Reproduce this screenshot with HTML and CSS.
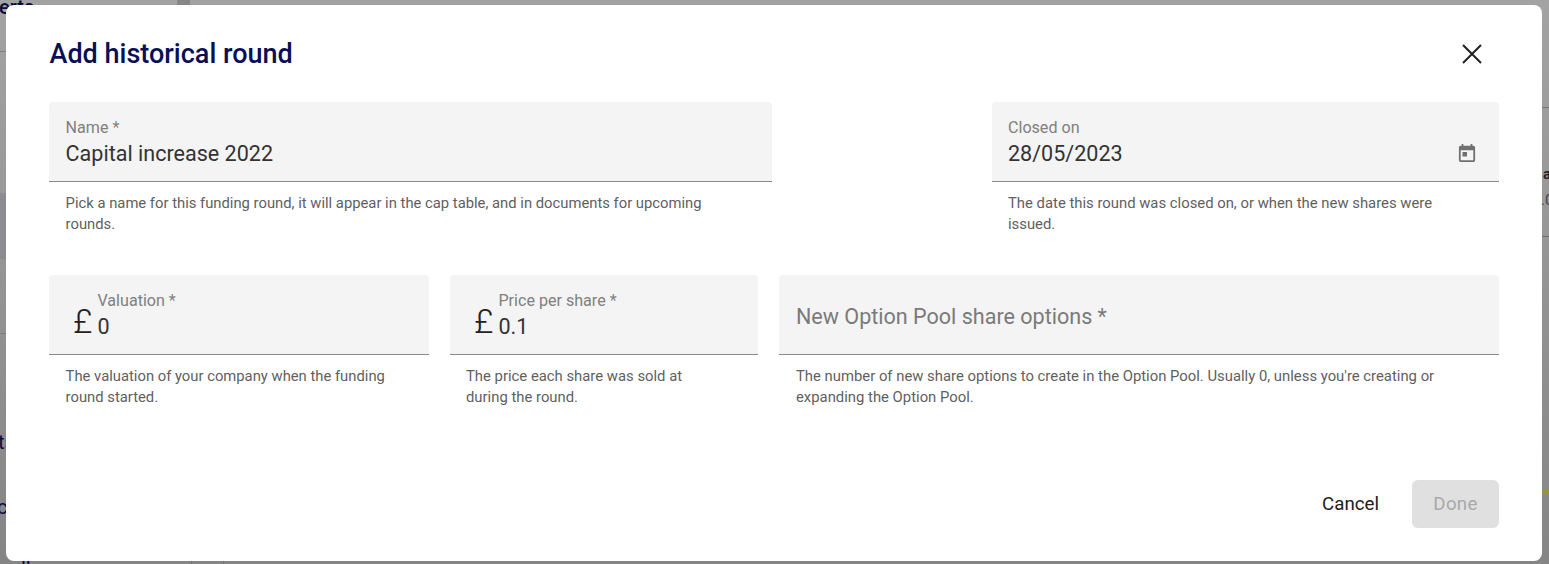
FILE: index.html
```html
<!DOCTYPE html>
<html lang="en">
<head>
<meta charset="utf-8">
<title>Add historical round</title>
<link rel="stylesheet" href="styles.css">
</head>
<body>
<div class="backdrop">
  <span class="bg-line bg-l1"></span>
  <span class="bg-line bg-l2"></span>
  <span class="bg-line bg-r1"></span>
  <span class="bg-line bg-r2"></span>
  <span class="bg-band"></span>
  <span class="bg-v bg-v1"></span>
  <span class="bg-v bg-v2"></span>
  <span class="bg-text bg-top">erts</span>
  <span class="bg-text bg-t">ts</span>
  <span class="bg-text bg-c">c</span>
  <span class="bg-text bg-u">ll</span>
  <span class="bg-text bg-a">a</span>
  <span class="bg-text bg-n">.0</span>
  <span class="bg-column"></span>
  <span class="bg-accent"></span>
</div>
<main class="dialog">
  <header class="dialog-head">
    <h1>Add historical round</h1>
    <button class="close" aria-label="Close">
      <svg width="24" height="24" viewBox="0 0 24 24"><path fill="none" stroke="currentColor" stroke-width="2" d="M3 3 21 21M21 3 3 21"/></svg>
    </button>
  </header>
  <section class="row row-one">
    <div class="field inset-half">
      <div class="box">
        <div class="stack">
          <span class="label">Name *</span>
          <span class="value">Capital increase 2022</span>
        </div>
      </div>
      <p class="hint">Pick a name for this funding round, it will appear in the cap table, and in documents for upcoming rounds.</p>
    </div>
    <div class="field">
      <div class="box">
        <div class="stack">
          <span class="label">Closed on</span>
          <span class="value">28/05/2023</span>
        </div>
        <svg class="calendar" width="24" height="24" viewBox="0 0 24 24"><path fill="currentColor" d="M19 4h-1V2h-2v2H8V2H6v2H5c-1.11 0-1.99.9-1.99 2L3 20a2 2 0 0 0 2 2h14c1.1 0 2-.9 2-2V6c0-1.1-.9-2-2-2zm0 16H5V9h14v11zM7 11h5v5H7z"/></svg>
      </div>
      <p class="hint">The date this round was closed on, or when the new shares were issued.</p>
    </div>
  </section>
  <section class="row row-two">
    <div class="field inset-half">
      <div class="box box-money">
        <span class="currency">£</span>
        <div class="stack">
          <span class="label">Valuation *</span>
          <span class="value">0</span>
        </div>
      </div>
      <p class="hint">The valuation of your company when the funding round started.</p>
    </div>
    <div class="field">
      <div class="box box-money">
        <span class="currency">£</span>
        <div class="stack">
          <span class="label">Price per share *</span>
          <span class="value">0.1</span>
        </div>
      </div>
      <p class="hint">The price each share was sold at during the round.</p>
    </div>
    <div class="field inset-full">
      <div class="box box-empty">
        <span class="placeholder">New Option Pool share options *</span>
      </div>
      <p class="hint">The number of new share options to create in the Option Pool. Usually 0, unless you're creating or expanding the Option Pool.</p>
    </div>
  </section>
  <footer class="actions">
    <button class="btn btn-cancel">Cancel</button>
    <button class="btn btn-done" disabled>Done</button>
  </footer>
</main>
</body>
</html>
```

FILE: styles.css
```css
* { box-sizing: border-box; }
html, body { margin: 0; height: 100%; }
body {
  width: 1549px;
  height: 564px;
  overflow: hidden;
  position: relative;
  background: linear-gradient(#a3a3a3, #858585);
  font-family: Roboto, "Liberation Sans", sans-serif;
  padding: 5px 7px 3px 6px;
}
.backdrop { position: absolute; inset: 0; overflow: hidden; }
.bg-line { position: absolute; height: 1px; background: #808080; }
.bg-l1 { left: 0; width: 6px; top: 51px; }
.bg-l2 { left: 0; width: 6px; top: 333px; }
.bg-r1 { right: 0; width: 7px; top: 107px; background: #777; }
.bg-r2 { right: 0; width: 7px; top: 236px; background: #6e6e6e; }
.bg-band { position: absolute; left: 0; top: 193px; width: 6px; height: 66px; background: #8b8b91; }
.bg-v { position: absolute; bottom: 0; width: 1px; height: 3px; background: #6f6f6f; }
.bg-v1 { left: 191px; }
.bg-v2 { left: 223px; }
.bg-text { position: absolute; color: #0a0a3a; font-size: 20px; line-height: 20px; }
.bg-top { left: -1px; top: -3px; font-weight: 500; }
.bg-t { left: -2px; top: 432px; }
.bg-c { left: -3px; top: 497px; }
.bg-u { left: 21px; top: 559px; }
.bg-a { left: 1543px; top: 164px; color: #222; font-size: 15px; font-weight: 700; }
.bg-n { left: 1541px; top: 190px; color: #444; font-size: 15px; }
.bg-column { position: absolute; left: 177px; top: 0; width: 13px; height: 5px; background: #878787; }
.bg-accent { position: absolute; right: 0; top: 490px; width: 7px; height: 4px; background: #9a962f; }
.dialog {
  position: relative;
  height: 556px;
  background: #fff;
  border-radius: 8px;
  padding: 0 43px;
  display: flex;
  flex-direction: column;
}
.dialog-head {
  display: flex;
  justify-content: space-between;
  align-items: center;
  height: 97px;
}
h1 {
  margin: 0 0 0 .5px;
  font-size: 27px;
  font-weight: 500;
  line-height: 32px;
  color: #0a0f55;
}
.close {
  border: 0;
  background: none;
  padding: 0;
  width: 24px;
  height: 24px;
  margin-right: 15px;
  color: #212121;
}
.row { display: grid; column-gap: 21px; }
.row-one { grid-template-columns: 723px 507px; column-gap: 220px; height: 173px; }
.row-two { grid-template-columns: 380px 308px 720px; height: 205px; }
.box {
  height: 80px;
  background: #f4f4f4;
  border-bottom: 1px solid #8a8a8a;
  border-radius: 4px 4px 0 0;
  padding: 5px 16px 0;
  display: flex;
  align-items: center;
  justify-content: space-between;
}
.box-money { justify-content: flex-start; padding-left: 24px; gap: 5px; }
.box-empty { padding-top: 4px; }
.stack { display: flex; flex-direction: column; }
.label { font-size: 16.1px; line-height: 20px; font-weight: 400; color: #808080; }
.value { font-size: 21.55px; line-height: 32px; color: #333; }
.calendar { color: #707070; margin: 18px 4px 0 0; transform: scale(0.9); }
.currency { font-size: 34px; font-weight: 300; line-height: 40px; color: #222; margin-top: 8px; }
.placeholder { font-size: 21.55px; line-height: 32px; color: #7a7a7a; }
.hint {
  margin: 11px 0 0;
  padding: 0 32px 0 16px;
  font-size: 14.85px;
  line-height: 21px;
  color: #5f5f5f;
}
.inset-half .hint { padding-left: 16.6px; font-size: 14.8px; }
.inset-half .box:not(.box-money) { padding-left: 16.6px; }
.inset-full .hint, .inset-full .box { padding-left: 17px; }
.actions { display: flex; justify-content: flex-end; align-items: center; gap: 23px; }
.btn {
  height: 48px;
  border: 0;
  border-radius: 6px;
  font-family: inherit;
  font-size: 18.7px;
  font-weight: 400;
  background: none;
  padding: 0;
}
.btn-cancel { width: 77px; color: #212121; }
.btn-done { width: 87px; background: #e0e0e0; color: #a9a9a9; letter-spacing: .3px; }
```
